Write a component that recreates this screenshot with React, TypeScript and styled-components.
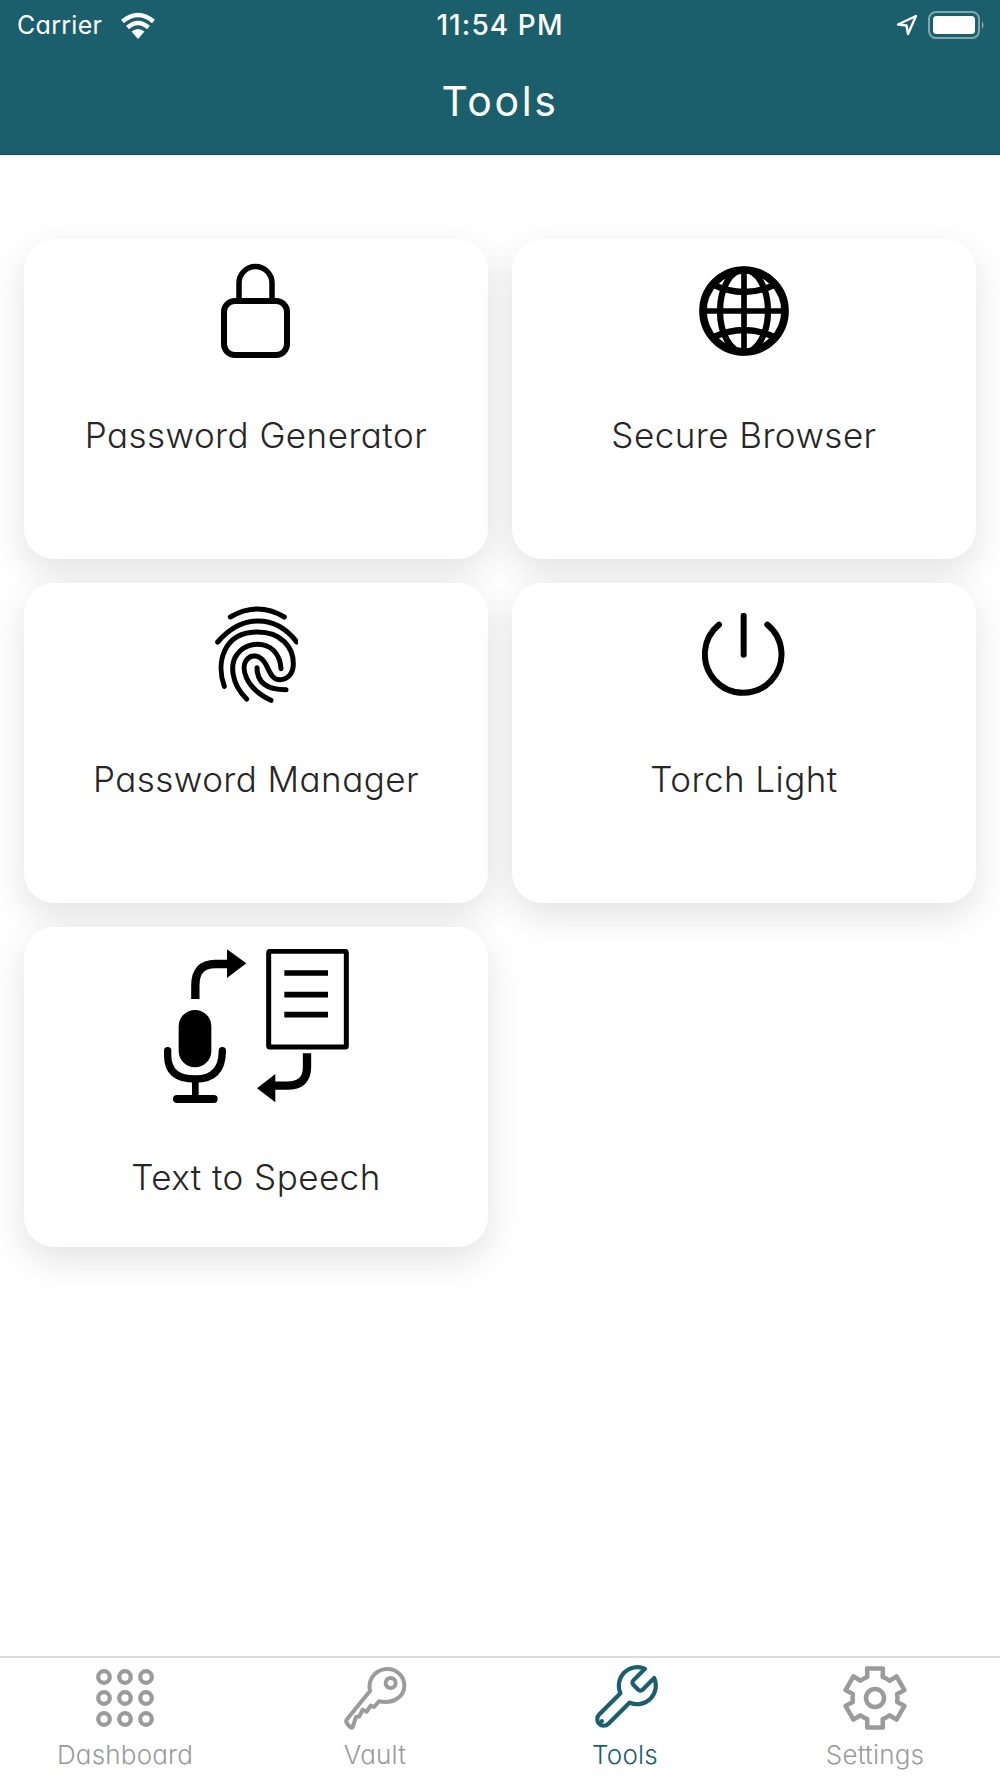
import React from "react";
import styled, { createGlobalStyle } from "styled-components";

const teal = "#1a5f6b";
const grey = "#9b9b9b";

const Global = createGlobalStyle`
  html, body { margin: 0; padding: 0; background: #fff; }
  body { font-family: "Inter", "Liberation Sans", sans-serif; font-feature-settings: "cv11" 1; }
`;

const Page = styled.div`
  width: 1000px;
  height: 1778px;
  display: flex;
  flex-direction: column;
  overflow: hidden;
  background: #fff;
`;

const Header = styled.header`
  height: 155px;
  box-sizing: border-box;
  flex: none;
  display: flex;
  flex-direction: column;
  background: ${teal};
  border-bottom: 1px solid #134c56;
  color: #fff;
`;

const StatusBar = styled.div`
  height: 50px;
  box-sizing: border-box;
  padding: 0 14px;
  display: grid;
  grid-template-columns: 1fr auto 1fr;
  align-items: center;
`;

const StatusLeft = styled.div`
  display: flex;
  align-items: center;
  gap: 18px;
  padding-left: 3px;
  font-size: 25px;
  letter-spacing: 0.3px;
`;

const StatusTime = styled.div`
  font-size: 28px;
  font-weight: 500;
  letter-spacing: 1.1px;
`;

const StatusRight = styled.div`
  display: flex;
  align-items: center;
  justify-content: flex-end;
  gap: 10px;
`;

const Title = styled.h1`
  margin: 0;
  padding-top: 12px;
  font-size: 41px;
  line-height: 79px;
  font-weight: 400;
  text-align: center;
  letter-spacing: 2.6px;
`;

const Main = styled.main`
  flex: 1;
  padding: 84px 24px 0;
`;

const Grid = styled.div`
  display: grid;
  grid-template-columns: 464px 464px;
  grid-auto-rows: 320px;
  gap: 24px;
`;

const Card = styled.div`
  background: #fff;
  border-radius: 30px;
  box-shadow: 0 12px 36px rgba(0, 0, 0, 0.12);
  padding-top: 22px;
  display: flex;
  flex-direction: column;
  align-items: center;
`;

const CardIcon = styled.div<{ $h: number }>`
  height: ${(p) => p.$h}px;
  display: flex;
  align-items: center;
  justify-content: center;
`;

const CardLabel = styled.div`
  margin-top: 50px;
  font-size: 35px;
  line-height: 48px;
  font-weight: 300;
  letter-spacing: 0.45px;
  color: #262626;
`;

const TabBar = styled.nav`
  height: 122px;
  flex: none;
  box-sizing: border-box;
  border-top: 2px solid #dcdcdc;
  display: grid;
  grid-template-columns: repeat(4, 250px);
`;

const Tab = styled.div<{ $active?: boolean }>`
  display: flex;
  flex-direction: column;
  align-items: center;
  padding-top: 7px;
  color: ${(p) => (p.$active ? teal : grey)};
`;

const TabIcon = styled.div`
  height: 66px;
  display: flex;
  align-items: center;
  justify-content: center;
`;

const TabLabel = styled.div`
  margin-top: 6px;
  font-size: 26px;
  line-height: 36px;
  font-weight: 300;
  letter-spacing: 0.2px;
`;

const Wifi = () => (
  <svg width="36" height="27" viewBox="0 0 36 27">
    <path d="M18 27 L11.5 19.5 Q18 14.5 24.5 19.5 Z" fill="#fff" />
    <path d="M7.5 15.5 Q18 6.5 28.5 15.5" fill="none" stroke="#fff" strokeWidth="4.5" />
    <path d="M2.5 9.5 Q18 -3.5 33.5 9.5" fill="none" stroke="#fff" strokeWidth="4.5" />
  </svg>
);

const Location = () => (
  <svg width="22" height="22" viewBox="0 0 22 22">
    <path d="M20 2 L2 10.5 L10.5 11.5 L12 20 Z" fill="none" stroke="#fff" strokeWidth="2.4" strokeLinejoin="round" />
  </svg>
);

const Battery = () => (
  <svg width="58" height="28" viewBox="0 0 58 28">
    <rect x="1" y="1" width="50" height="26" rx="7" fill="none" stroke="#fff" strokeOpacity="0.45" strokeWidth="2" />
    <rect x="5" y="5" width="42" height="18" rx="3.5" fill="#fff" />
    <path d="M54 10 Q57 14 54 18 Z" fill="#fff" fillOpacity="0.5" />
  </svg>
);

const Lock = () => (
  <svg width="70" height="96" viewBox="0 0 70 96">
    <path d="M18 38 V20 a16.500 16.500 0 0 1 33 0 V38" fill="none" stroke="#000" strokeWidth="5.500" />
    <rect x="3" y="38" width="63" height="54" rx="11" fill="#fff" stroke="#000" strokeWidth="6" />
  </svg>
);

const Globe = () => (
  <svg width="90" height="90" viewBox="0 0 270 270">
    <g fill="none" stroke="#000">
      <circle cx="135" cy="135" r="123" strokeWidth="23" />
      <ellipse cx="135" cy="135" rx="72" ry="124" strokeWidth="19" />
      <path d="M135 10 V260 M10 135 H260" strokeWidth="17" />
      <path d="M42 56 Q135 100 228 56 M42 214 Q135 170 228 214" strokeWidth="19" />
    </g>
  </svg>
);

const Fingerprint = () => (
  <svg width="84" height="98" viewBox="99 47 252 294">
    <g fill="none" stroke="#000" strokeWidth="15" strokeLinecap="round">
      <path d="M148 80 Q230 32 310 80" />
      <path d="M110 155 Q165 92 230 92 Q300 92 347 155" />
      <path d="M130 288 C105 220 125 125 230 125 C300 125 337 170 337 220 C337 250 320 268 297 268 C268 268 265 235 250 215 C235 195 212 190 198 207 C178 230 190 292 270 330" />
      <path d="M197 326 C150 280 145 220 170 190 C205 145 295 150 300 235" />
      <path d="M228 232 C228 270 250 298 315 298" />
    </g>
  </svg>
);

const Power = () => (
  <svg width="84" height="84" viewBox="97 40 252 252">
    <g fill="none" stroke="#000" strokeWidth="18" strokeLinecap="round">
      <path d="M222 48 V165" />
      <path d="M148 75 A115 115 0 1 0 293 75" />
    </g>
  </svg>
);

const Speech = () => (
  <svg width="187" height="154" viewBox="68 55 561 462">
    <rect x="385" y="62" width="233" height="287" rx="4" fill="none" stroke="#000" strokeWidth="15" />
    <path d="M432 127 H563 M432 192 H563 M432 252 H563" stroke="#000" strokeWidth="17" />
    <path d="M165 205 V165 Q165 100 225 100 H270" fill="none" stroke="#000" strokeWidth="25" />
    <path d="M260 56 L318 98 L260 142 Z" fill="#000" />
    <path d="M500 368 V410 Q500 465 440 465 H395" fill="none" stroke="#000" strokeWidth="25" />
    <path d="M405 430 L350 473 L405 515 Z" fill="#000" />
    <rect x="115" y="238" width="98" height="172" rx="49" fill="#000" />
    <path d="M82 360 V375 Q82 445 165 445 Q246 445 246 360" fill="none" stroke="#000" strokeWidth="22" strokeLinecap="round" />
    <path d="M165 445 V505" stroke="#000" strokeWidth="20" />
    <path d="M110 505 H220" stroke="#000" strokeWidth="24" strokeLinecap="round" />
  </svg>
);

const Dots = () => (
  <svg width="60" height="60" viewBox="0 0 60 60">
    {[9, 30, 51].map((y) =>
      [9, 30, 51].map((x) => (
        <circle key={`${x}-${y}`} cx={x} cy={y} r="5.800" fill="none" stroke={grey} strokeWidth="4.300" />
      ))
    )}
  </svg>
);

const Key = () => (
  <svg width="66" height="66" viewBox="1024 72 198 198">
    <g fill="none" stroke={grey} strokeWidth="12" strokeLinejoin="round">
      <path d="M1108 150 C1100 110 1130 84 1160 84 C1190 84 1211 108 1211 134 C1211 165 1180 190 1135 181 L1120 198 L1110 194 L1098 212 L1086 206 L1076 226 L1066 228 L1056 258 Q1052 262 1047 257 L1039 247 Q1034 241 1039 235 Z" />
      <circle cx="1170" cy="126" r="15" />
    </g>
  </svg>
);

const Wrench = () => (
  <svg width="74" height="74" viewBox="0 0 24 24">
    <g fill="none" stroke={teal} strokeWidth="1.350" strokeLinejoin="round">
      <path d="M14.7 6.300a1 1 0 0 0 0 1.400l1.600 1.600a1 1 0 0 0 1.400 0l3.770-3.770a6 6 0 0 1-7.940 7.940l-6.910 6.910a2.120 2.120 0 0 1-3-3l6.910-6.910a6 6 0 0 1 7.940-7.940l-3.760 3.760z" />
    </g>
    <circle cx="4.500" cy="19.500" r="0.700" fill={teal} />
  </svg>
);

const gearPath = (() => {
  const c = 34;
  const pt = (r: number, deg: number) => {
    const a = (deg * Math.PI) / 180;
    return `${(c + r * Math.cos(a)).toFixed(2)} ${(c + r * Math.sin(a)).toFixed(2)}`;
  };
  let d = "";
  for (let i = 0; i < 6; i++) {
    const a = -90 + i * 60;
    d += `${i === 0 ? "M" : "L"}${pt(22.5, a - 30)} L${pt(22.5, a - 20)} L${pt(30.5, a - 15)} L${pt(30.5, a + 15)} L${pt(22.5, a + 20)} `;
  }
  return d + "Z";
})();

const Gear = () => (
  <svg width="68" height="68" viewBox="0 0 68 68">
    <path d={gearPath} fill="none" stroke={grey} strokeWidth="4.500" strokeLinejoin="round" />
    <circle cx="34" cy="34" r="9" fill="none" stroke={grey} strokeWidth="4.500" />
  </svg>
);

const cards = [
  { label: "Password Generator", h: 100, icon: <Lock /> },
  { label: "Secure Browser", h: 100, icon: <Globe /> },
  { label: "Password Manager", h: 100, icon: <Fingerprint /> },
  { label: "Torch Light", h: 100, icon: <Power /> },
  { label: "Text to Speech", h: 154, icon: <Speech /> },
];

const tabs = [
  { label: "Dashboard", icon: <Dots /> },
  { label: "Vault", icon: <Key /> },
  { label: "Tools", icon: <Wrench />, active: true },
  { label: "Settings", icon: <Gear /> },
];

export default function App() {
  return (
    <Page>
      <Global />
      <Header>
        <StatusBar>
          <StatusLeft>
            Carrier
            <Wifi />
          </StatusLeft>
          <StatusTime>11:54 PM</StatusTime>
          <StatusRight>
            <Location />
            <Battery />
          </StatusRight>
        </StatusBar>
        <Title>Tools</Title>
      </Header>
      <Main>
        <Grid>
          {cards.map((c) => (
            <Card key={c.label}>
              <CardIcon $h={c.h}>{c.icon}</CardIcon>
              <CardLabel>{c.label}</CardLabel>
            </Card>
          ))}
        </Grid>
      </Main>
      <TabBar>
        {tabs.map((t) => (
          <Tab key={t.label} $active={t.active}>
            <TabIcon>{t.icon}</TabIcon>
            <TabLabel>{t.label}</TabLabel>
          </Tab>
        ))}
      </TabBar>
    </Page>
  );
}
